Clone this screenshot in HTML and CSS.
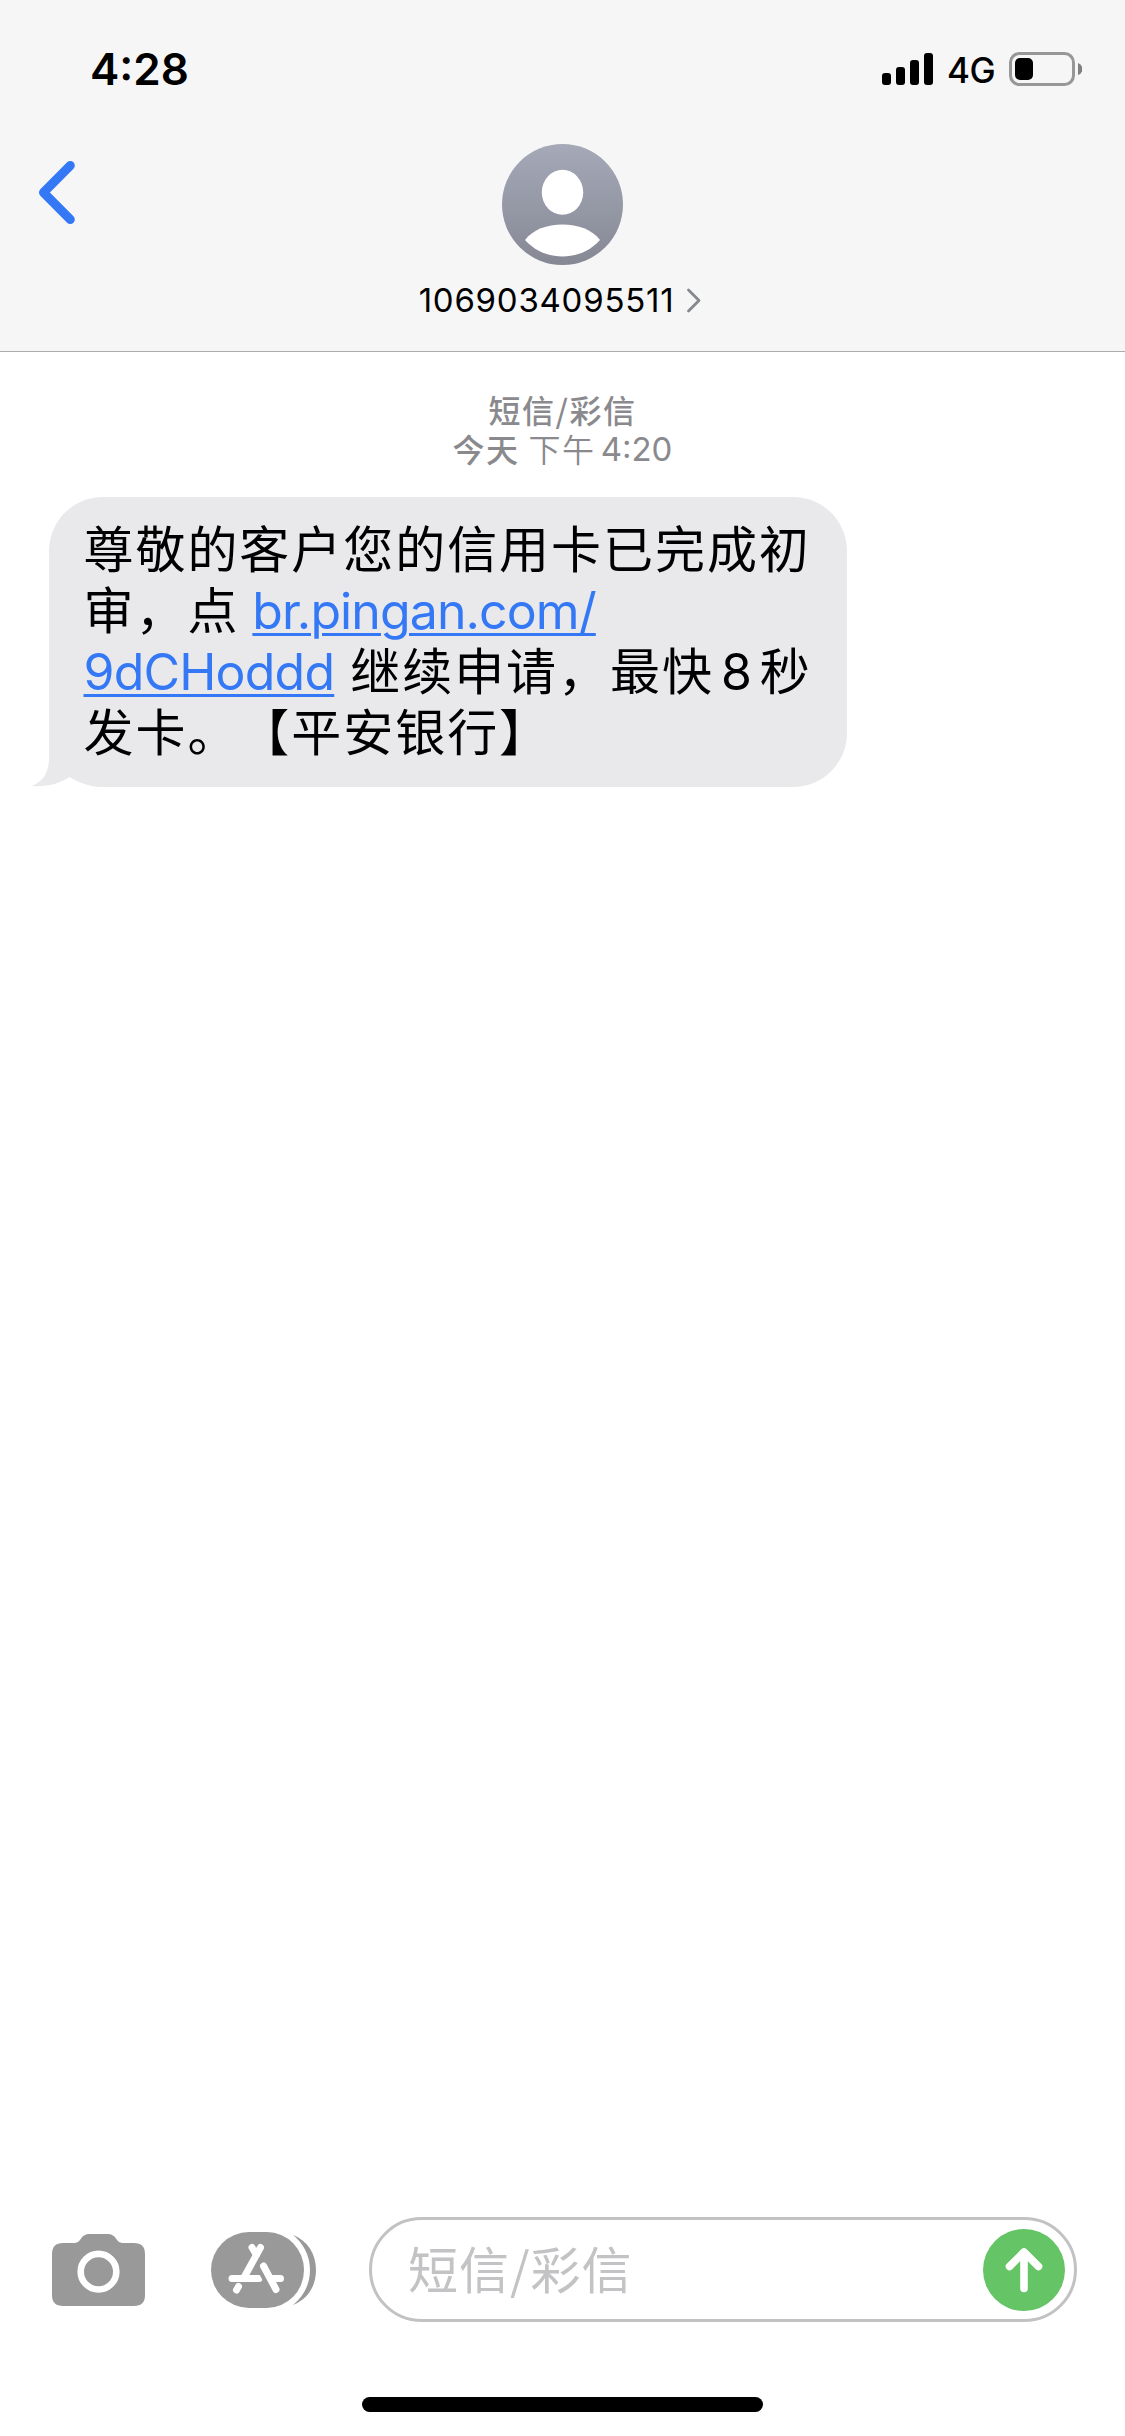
FILE: index.html
```html
<!DOCTYPE html>
<html lang="zh-CN">
<head>
<meta charset="utf-8">
<title>1069034095511</title>
<link rel="stylesheet" href="styles.css">
</head>
<body>
<div class="screen">
  <header class="header">
    <div class="status">
      <span class="clock">4:28</span>
      <div class="indicators">
        <svg class="signal" width="51" height="34" viewBox="0 0 51 34">
          <rect x="0" y="21" width="9" height="12" rx="3"/>
          <rect x="14" y="15" width="9" height="18" rx="3"/>
          <rect x="28" y="8" width="9" height="25" rx="3"/>
          <rect x="42" y="1" width="9" height="32" rx="3"/>
        </svg>
        <span class="network">4G</span>
        <svg class="battery" width="73" height="34" viewBox="0 0 73 34">
          <rect x="1.5" y="1.5" width="63" height="31" rx="9" fill="none" stroke="#979797" stroke-width="3"/>
          <rect x="6" y="6" width="18" height="22" rx="5"/>
          <path d="M69 11a7 6.500 0 0 1 0 12z" fill="#808080"/>
        </svg>
      </div>
    </div>
    <nav class="nav">
      <a class="back">
        <svg width="40" height="66" viewBox="0 0 40 66"><path d="M34.300 6.500L7.500 33.500L34.300 60.500" fill="none" stroke="#3478f6" stroke-width="9" stroke-linecap="round" stroke-linejoin="round"/></svg>
      </a>
      <div class="contact">
        <svg width="121" height="121" viewBox="0 0 121 121">
          <defs><linearGradient id="avatar" x1="0" y1="0" x2="0" y2="1"><stop offset="0" stop-color="#a5a9b8"/><stop offset="1" stop-color="#868994"/></linearGradient></defs>
          <circle cx="60.500" cy="60.500" r="60.500" fill="url(#avatar)"/>
          <ellipse cx="60.500" cy="48.300" rx="20.700" ry="22.500" fill="#fff"/>
          <path d="M23 96C31 85.500 45 80.500 60.500 80.500S90 85.500 98 96C88 107 75 112.500 60.500 112.500S33 107 23 96Z" fill="#fff"/>
        </svg>
        <div class="number">
          <span>1069034095511</span>
          <svg width="16" height="26" viewBox="0 0 16 26"><path d="M2.500 3L13 13.500L2.500 24" fill="none" stroke="#85888e" stroke-width="2.800" stroke-linecap="round" stroke-linejoin="round"/></svg>
        </div>
      </div>
    </nav>
  </header>

  <main class="thread">
    <div class="stamp">
      <div class="kind">短信/彩信</div>
      <div class="when"><b>今天</b><span class="noon">下午</span><span class="hour">4:20</span></div>
    </div>
    <div class="bubble">
      <svg class="tail" width="74" height="60" viewBox="0 0 74 60"><path d="M17 0V31C17 46 11 54 0 59C14 60 27 57 37.500 50C45 55 57 59.500 73 60V0Z"/></svg>
      <div>尊敬的客户您的信用卡已完成初</div>
      <div>审，点<a class="link host">br.pingan.com/</a></div>
      <div><a class="link code">9dCHoddd</a><span class="after">继续申请，最快</span><span class="digit">8</span>秒</div>
      <div>发卡。【平安银行】</div>
    </div>
  </main>

  <footer class="composer">
    <svg class="camera" width="93" height="73" viewBox="0 0 93 73">
      <path d="M11 9H23Q26 9 28 6L29 4.500Q32 0 37 0H56Q61 0 64 4.500L65 6Q67 9 70 9H82Q93 9 93 20V61Q93 72 82 72H11Q0 72 0 61V20Q0 9 11 9Z" fill="#999"/>
      <circle cx="46.500" cy="37.700" r="17.800" fill="none" stroke="#fff" stroke-width="6.600"/>
    </svg>
    <svg class="apps" width="106" height="76" viewBox="0 0 106 76">
      <path d="M38 0H56A37 38 0 0 1 56 76H38A38 38 0 0 1 38 0Z" fill="#999"/>
      <path d="M82 3C97 9 105 22 105 38S97 67 82 73C92 65 99 53 99 38S92 11 82 3Z" fill="#999"/>
      <g fill="none" stroke="#fff" stroke-width="7" stroke-linecap="round">
        <path d="M41 15.500L45.500 23M49.500 15.500L33 45.500M52.500 34L65 57.500M21 46.500H48M61 46.500H69.500M27.500 54.500L25.500 58"/>
      </g>
      <path d="M48.500 29Q46 36 50 43L55 52" fill="none" stroke="#999" stroke-width="2.200"/>
    </svg>
    <div class="field">
      <span class="placeholder">短信/彩信</span>
      <svg width="82" height="82" viewBox="0 0 82 82">
        <circle cx="41" cy="41" r="41" fill="#65c466"/>
        <path d="M41 59.500V24M26.500 37.500L41 23L55.500 37.500" fill="none" stroke="#fff" stroke-width="7.600" stroke-linecap="round" stroke-linejoin="round"/>
      </svg>
    </div>
  </footer>
  <div class="home"></div>
</div>
</body>
</html>
```
FILE: styles.css
```css
* { box-sizing: border-box; }
body {
  margin: 0;
  background: #fff;
  color: #000;
  font-family: Inter, "Noto Sans CJK SC", sans-serif;
}
svg { display: block; flex: none; }
.screen { width: 1125px; height: 2436px; display: flex; flex-direction: column; overflow: hidden; }

.header { height: 352px; background: #f6f6f6; border-bottom: 1px solid #acacac; }
.status { height: 144px; padding: 0 43px 0 90px; display: flex; justify-content: space-between; align-items: flex-start; }
.clock { margin-top: 42px; font-size: 44px; line-height: 54px; font-weight: 600; letter-spacing: 0; }
.indicators { margin-top: 52px; display: flex; }
.network { width: 76px; padding-left: 14px; font-size: 35px; line-height: 37px; font-weight: 450; letter-spacing: -0.500px; }
.nav { display: grid; grid-template-columns: 1fr auto 1fr; }
.back { padding: 15px 0 0 36px; }
.contact { display: flex; flex-direction: column; align-items: center; }
.number { display: flex; align-items: center; gap: 12px; margin-top: 15px; margin-left: -4px; font-size: 33px; line-height: 40px; letter-spacing: 0.750px; }

.thread { flex: 1; padding: 38px 49px 0; }
.stamp { display: flex; flex-direction: column; align-items: center; color: #8a8a8e; font-family: "Noto Sans CJK SC", sans-serif; font-size: 32px; line-height: 39px; letter-spacing: 1.500px; }
.kind { font-weight: 500; }
.when { display: flex; }
.when b { font-weight: 500; }
.noon { margin-left: 9px; font-weight: 350; }
.hour { margin-left: 5px; padding-top: 1px; font-family: Inter, sans-serif; font-size: 33px; letter-spacing: 0; }

.bubble { position: relative; isolation: isolate; width: 798px; height: 290px; margin-top: 28px; padding: 19px 0 0 34.500px; border-radius: 54px; background: #e9e9eb; font-family: "Noto Sans CJK SC", sans-serif; font-size: 50px; line-height: 61px; letter-spacing: 1.950px; white-space: nowrap; text-spacing-trim: space-all; }
.bubble > div { height: 61px; }
.link, .digit { font-family: Inter, sans-serif; font-size: 50px; line-height: 1; }
.link { color: #3478f6; text-decoration: underline; text-decoration-thickness: 3px; text-underline-offset: 4px; }
.host { margin-left: 13px; letter-spacing: -0.900px; }
.code { letter-spacing: -0.800px; }
.after { margin-left: 16px; }
.digit { margin: 0 8px 0 7px; letter-spacing: 0; }
.tail { position: absolute; z-index: -1; left: -17px; bottom: 0; fill: #e9e9eb; }

.composer { height: 180px; padding: 0 48px 0 52px; display: flex; align-items: flex-start; }
.camera { margin-top: 17px; }
.apps { margin: 15px 0 0 66px; }
.field { flex: 1; height: 105px; margin-left: 52px; padding: 0 9px 0 36px; display: flex; justify-content: space-between; align-items: center; border: 3px solid #c2c2c2; border-radius: 53px; }
.placeholder { margin-top: -5px; font-family: "Noto Sans CJK SC", sans-serif; font-weight: 400; font-size: 50px; line-height: 60px; letter-spacing: 1px; color: #c3c3c5; }
.home { width: 401px; height: 15px; margin: 0 auto 24px; border-radius: 8px; background: #000; }
```
